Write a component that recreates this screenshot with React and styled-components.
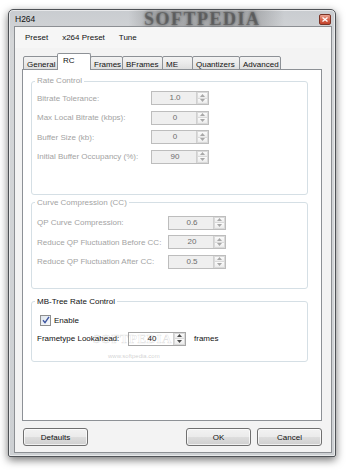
import styled, { createGlobalStyle } from 'styled-components';

const GlobalStyle = createGlobalStyle`
	html, body {
		margin: 0;
		padding: 0;
		background: #ffffff;
	}
	body {
		font-family: 'Liberation Sans', Arial, sans-serif;
		font-size: 8px;
		color: #000;
	}
`;

// TAB DEFINITIONS: WIDTH IN PX, MATCHES THE SCREENSHOT
const tabs = [
	{ name: 'General', width: 36 },
	{ name: 'RC', width: 34, active: true },
	{ name: 'Frames', width: 33 },
	{ name: 'BFrames', width: 41 },
	{ name: 'ME', width: 31 },
	{ name: 'Quantizers', width: 48 },
	{ name: 'Advanced', width: 42 },
];

const rateRows = [
	{ label: 'Bitrate Tolerance:', value: '1.0' },
	{ label: 'Max Local Bitrate (kbps):', value: '0' },
	{ label: 'Buffer Size (kb):', value: '0' },
	{ label: 'Initial Buffer Occupancy (%):', value: '90' },
];

const curveRows = [
	{ label: 'QP Curve Compression:', value: '0.6' },
	{ label: 'Reduce QP Fluctuation Before CC:', value: '20' },
	{ label: 'Reduce QP Fluctuation After CC:', value: '0.5' },
];

const SpinBox = ({ value, disabled }) => (
	<StyledSpin $disabled={disabled}>
		<span className='value'>{value}</span>
		<div className='arrows'>
			<span className='up'>
				<svg width='5' height='3' viewBox='0 0 5 3'>
					<path d='M2.5 0 L5 3 L0 3 Z' fill={disabled ? '#a8a8a8' : '#4d4d4d'} />
				</svg>
			</span>
			<span className='down'>
				<svg width='5' height='3' viewBox='0 0 5 3'>
					<path d='M0 0 L5 0 L2.5 3 Z' fill={disabled ? '#a8a8a8' : '#4d4d4d'} />
				</svg>
			</span>
		</div>
	</StyledSpin>
);

const App = () => {
	return (
		<>
			<GlobalStyle />
			<Page>
				<Window>
					<TitleBar>
						<span className='title'>H264</span>
						<Watermark>SOFTPEDIA</Watermark>
						<CloseButton>
							<svg width='6' height='5' viewBox='0 0 6 5'>
								<path d='M0.5 0.5 L5.5 4.5 M5.5 0.5 L0.5 4.5' stroke='#fff' strokeWidth='1.3' />
							</svg>
						</CloseButton>
					</TitleBar>

					<Client>
						<MenuBar>
							<span>Preset</span>
							<span>x264 Preset</span>
							<span>Tune</span>
						</MenuBar>

						<TabStrip>
							{tabs.map((t) => (
								<Tab key={t.name} $active={t.active} $width={t.width}>
									{t.name}
								</Tab>
							))}
						</TabStrip>

						<Panel>
							<Group $top={0}>
								<legend>Rate Control</legend>
								<Rows $labelWidth={114} $pt={5} $pb={30}>
									{rateRows.map((r) => (
										<Row key={r.label}>
											<Label $disabled>{r.label}</Label>
											<SpinBox value={r.value} disabled />
										</Row>
									))}
								</Rows>
							</Group>

							<Group $top={3}>
								<legend>Curve Compression (CC)</legend>
								<Rows $labelWidth={131} $pt={8} $pb={19}>
									{curveRows.map((r) => (
										<Row key={r.label}>
											<Label $disabled>{r.label}</Label>
											<SpinBox value={r.value} disabled />
										</Row>
									))}
								</Rows>
							</Group>

							<Group $top={8} $enabled>
								<legend>MB-Tree Rate Control</legend>
								<MbTree>
									<CheckRow>
										<Check>
											<svg width='8' height='8' viewBox='0 0 8 8'>
												<path d='M1 4.2 L3 6.6 L7 0.8' stroke='#3c55a0' strokeWidth='1.4' fill='none' />
											</svg>
										</Check>
										<span>Enable</span>
									</CheckRow>
									<LookRow>
										<span className='label'>Frametype Lookahead:</span>
										<SpinBox value='40' />
										<span className='unit'>frames</span>
										<FaintMark>SOFTPEDIA</FaintMark>
									</LookRow>
									<SiteMark>www.softpedia.com</SiteMark>
								</MbTree>
							</Group>
						</Panel>

						<ButtonRow>
							<Button>Defaults</Button>
							<div className='right'>
								<Button>OK</Button>
								<Button>Cancel</Button>
							</div>
						</ButtonRow>
					</Client>
				</Window>
			</Page>
		</>
	);
};

export default App;

const Page = styled.div`
	width: 350px;
	height: 473px;
	padding: 9px 0 0 8px;
	box-sizing: border-box;
	overflow: hidden;
`;

const Window = styled.div`
	width: 328px;
	height: 448px;
	box-sizing: border-box;
	border: 1px solid #4f5256;
	border-radius: 5px 5px 2px 2px;
	background: linear-gradient(180deg, #c9ccd0 0px, #d4d6d8 30px, #cdd0d3 100%);
	box-shadow: 0 3px 9px rgba(0, 0, 0, 0.55), inset 0 0 0 1px rgba(255, 255, 255, 0.55);
	padding: 0 3px 3px 5px;
	display: flex;
	flex-direction: column;
`;

const TitleBar = styled.div`
	position: relative;
	height: 16px;
	display: flex;
	align-items: center;
	justify-content: space-between;
	padding-left: 1px;
	background: linear-gradient(
		90deg,
		rgba(0, 0, 0, 0) 0%,
		rgba(0, 0, 0, 0) 36%,
		rgba(90, 90, 90, 0.35) 45%,
		rgba(80, 80, 80, 0.3) 75%,
		rgba(0, 0, 0, 0) 85%
	);

	.title {
		font-size: 8.5px;
		color: #111;
		margin-top: 1px;
	}
`;

const Watermark = styled.span`
	position: absolute;
	left: 130px;
	top: -1px;
	font-family: 'Liberation Serif', 'Times New Roman', serif;
	font-weight: bold;
	font-size: 18px;
	letter-spacing: 1.5px;
	color: rgba(70, 70, 70, 0.5);
	text-shadow: 0 0 3px rgba(40, 40, 40, 0.6);
	pointer-events: none;
`;

const CloseButton = styled.div`
	width: 12px;
	height: 11px;
	margin-top: 3px;
	margin-right: 1px;
	box-sizing: border-box;
	border: 1px solid #7a3326;
	border-radius: 2px;
	background: linear-gradient(180deg, #e9a493 0%, #d8664f 50%, #c2432c 100%);
	display: flex;
	align-items: center;
	justify-content: center;
`;

const Client = styled.div`
	flex: 1;
	background: #f3f3f3;
	border: 1px solid #8c8f93;
	display: flex;
	flex-direction: column;
	padding: 0 9px 5px 7px;
`;

const MenuBar = styled.div`
	height: 21px;
	display: flex;
	align-items: center;
	gap: 14px;
	margin-left: -7px;
	margin-right: -9px;
	padding-left: 10px;
	background: #f6f6f6;
	color: #111;
`;

const TabStrip = styled.div`
	display: flex;
	align-items: flex-end;
	height: 16px;
	margin-top: 6px;
	padding-left: 1px;
	position: relative;
	z-index: 1;
	margin-bottom: -1px;
`;

const Tab = styled.div`
	box-sizing: border-box;
	width: ${(p) => p.$width}px;
	height: ${(p) => (p.$active ? 17 : 14)}px;
	margin-left: ${(p) => (p.$active ? -1 : 0)}px;
	padding-left: ${(p) => (p.$active ? 5 : 3)}px;
	padding-top: ${(p) => (p.$active ? 2 : 3)}px;
	border: 1px solid #8d9196;
	border-bottom: ${(p) => (p.$active ? 'none' : '1px solid #8d9196')};
	margin-right: -1px;
	border-radius: 2px 2px 0 0;
	background: ${(p) =>
		p.$active ? '#ffffff' : 'linear-gradient(180deg, #f3f3f3 0%, #ebebeb 50%, #dedede 100%)'};
	color: #111;
	white-space: nowrap;
	z-index: ${(p) => (p.$active ? 2 : 0)};
	line-height: 9px;
`;

const Panel = styled.div`
	height: 352px;
	box-sizing: border-box;
	width: 300px;
	background: #ffffff;
	border: 1px solid #8d9196;
	padding: 6px 13px 0 8px;
	display: flex;
	flex-direction: column;
`;

const Group = styled.fieldset`
	margin: ${(p) => p.$top}px 0 0 0;
	padding: 0 0 0 5px;
	border: 1px solid #d5dfe5;
	border-radius: 3px;
	min-width: 0;

	legend {
		font-size: 8px;
		line-height: 10px;
		padding: 0 2px;
		margin-left: -2px;
		color: ${(p) => (p.$enabled ? '#111' : '#a3a3a3')};
	}
`;

const Rows = styled.div`
	display: grid;
	grid-template-columns: ${(p) => p.$labelWidth}px auto;
	row-gap: 5.5px;
	padding-top: ${(p) => p.$pt}px;
	padding-bottom: ${(p) => p.$pb}px;
`;

const Row = styled.div`
	display: contents;
`;

const Label = styled.span`
	display: flex;
	align-items: center;
	height: 14px;
	color: ${(p) => (p.$disabled ? '#a3a3a3' : '#111')};
	white-space: nowrap;
`;

const StyledSpin = styled.div`
	position: relative;
	width: 58px;
	height: 14px;
	box-sizing: border-box;
	border: 1px solid ${(p) => (p.$disabled ? '#bdbdbd' : '#a6a6a6')};
	background: ${(p) => (p.$disabled ? '#efefef' : '#ffffff')};
	display: flex;

	.value {
		flex: 1;
		text-align: center;
		line-height: 12px;
		font-size: 8px;
		color: ${(p) => (p.$disabled ? '#6d6d6d' : '#111')};
		padding-left: 2px;
	}

	.arrows {
		width: 11px;
		display: flex;
		flex-direction: column;
		border-left: 1px solid #d0d0d0;
	}

	.up,
	.down {
		flex: 1;
		display: flex;
		align-items: center;
		justify-content: center;
		background: linear-gradient(180deg, #fbfbfb, #ececec);
		border: 1px solid #dadada;
	}

	.down {
		border-top: none;
	}
`;

const MbTree = styled.div`
	position: relative;
	display: flex;
	flex-direction: column;
	padding: 8px 0 15px 0;
	gap: 6px;
`;

const CheckRow = styled.div`
	display: flex;
	align-items: center;
	gap: 3px;
	padding-left: 3px;
	height: 11px;
	color: #111;
`;

const Check = styled.span`
	width: 11px;
	height: 11px;
	box-sizing: border-box;
	border: 1px solid #8e8f8f;
	background: linear-gradient(135deg, #dfe6ee, #f8f9fb);
	display: flex;
	align-items: center;
	justify-content: center;
`;

const LookRow = styled.div`
	position: relative;
	display: flex;
	align-items: center;
	height: 14px;
	color: #111;

	.label {
		width: 91px;
		white-space: nowrap;
	}

	.unit {
		margin-left: 8px;
	}
`;

const FaintMark = styled.span`
	position: absolute;
	left: 56px;
	top: -1px;
	font-family: 'Liberation Serif', 'Times New Roman', serif;
	font-weight: bold;
	font-size: 13px;
	letter-spacing: 0.5px;
	color: rgba(255, 255, 255, 0);
	-webkit-text-stroke: 0.5px rgba(150, 150, 150, 0.3);
	pointer-events: none;
`;

const SiteMark = styled.span`
	position: absolute;
	left: 71px;
	bottom: 2px;
	font-size: 6px;
	color: rgba(150, 150, 150, 0.45);
`;

const ButtonRow = styled.div`
	display: flex;
	justify-content: space-between;
	margin-top: 7px;
	padding-left: 1px;

	.right {
		display: flex;
		gap: 6px;
	}
`;

const Button = styled.div`
	width: 65px;
	height: 18px;
	box-sizing: border-box;
	border: 1px solid #707070;
	border-radius: 3px;
	background: linear-gradient(180deg, #f2f2f2 0%, #ebebeb 48%, #dddddd 52%, #cfcfcf 100%);
	box-shadow: inset 0 0 0 1px rgba(255, 255, 255, 0.7);
	display: flex;
	align-items: center;
	justify-content: center;
	color: #111;
`;
